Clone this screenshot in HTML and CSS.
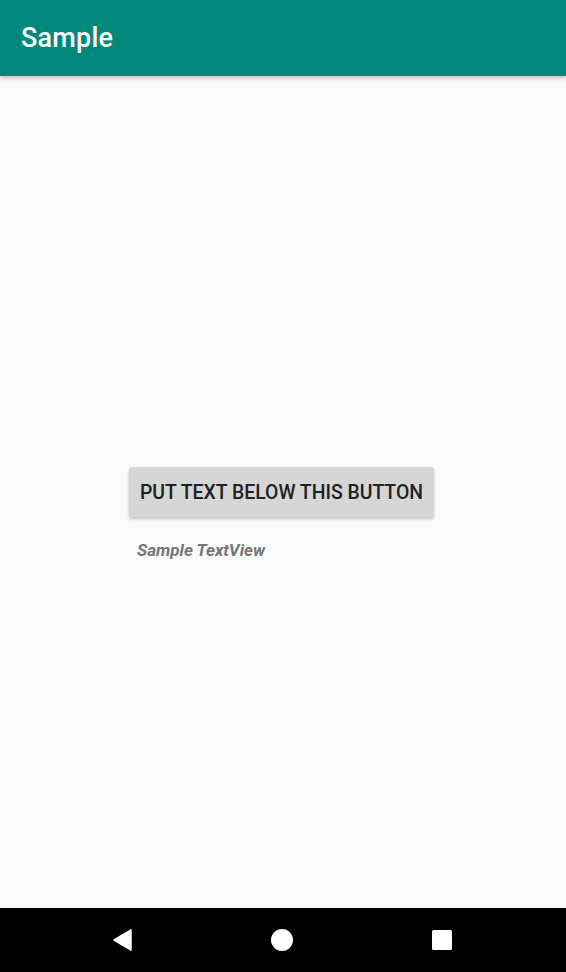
FILE: index.html
```html
<!DOCTYPE html>
<html>
<head>
<meta charset="utf-8">
<link rel="stylesheet" href="styles.css">
</head>
<body>
<div class="screen">
  <header class="toolbar"><span class="title">Sample</span></header>
  <main class="content">
    <button class="btn">PUT TEXT BELOW THIS BUTTON</button>
    <div class="textview">Sample TextView</div>
  </main>
  <nav class="navbar">
    <svg class="nav-icon" width="24" height="24" viewBox="0 0 24 24"><path d="M21 2 L21 22 L4 12 Z" fill="#fff" stroke="#fff" stroke-width="1.5" stroke-linejoin="round"/></svg>
    <svg class="nav-icon" width="24" height="24" viewBox="0 0 24 24"><circle cx="12" cy="12" r="11" fill="#fff"/></svg>
    <svg class="nav-icon" width="24" height="24" viewBox="0 0 24 24"><rect x="3" y="2" width="20" height="20" rx="1.5" fill="#fff"/></svg>
  </nav>
</div>
</body>
</html>
```
FILE: styles.css
```css
html, body {
  margin: 0;
  padding: 0;
  height: 100%;
}
body {
  font-family: Roboto, "Noto Sans", sans-serif;
  background: #fafafa;
}
.screen {
  height: 972px;
  display: flex;
  flex-direction: column;
}
.toolbar {
  height: 76px;
  flex: 0 0 76px;
  background: #00897b;
  display: flex;
  align-items: center;
  padding-left: 21px;
  box-shadow: 0 2px 4px rgba(0,0,0,0.25);
  position: relative;
  z-index: 1;
}
.title {
  color: #fff;
  font-size: 27px;
  font-weight: 500;
  letter-spacing: 0.2px;
}
.content {
  flex: 1;
  display: grid;
  grid-template-rows: 1fr auto 1fr;
  grid-template-columns: 1fr auto 1fr;
  padding-right: 3px;
  background: #fafafa;
}
.btn {
  grid-row: 2;
  grid-column: 2;
  height: 50px;
  width: 305px;
  border: none;
  border-radius: 3px;
  background: #d6d6d6;
  color: #212121;
  font-family: Roboto, sans-serif;
  font-weight: 500;
  font-size: 19.4px;
  padding: 0;
  box-shadow: 0 2px 3px rgba(0,0,0,0.22);
}
.textview {
  grid-row: 3;
  grid-column: 2;
  justify-self: start;
  align-self: start;
  margin-left: 8px;
  margin-top: 23px;
  font-size: 17px;
  font-style: italic;
  font-weight: 700;
  color: #757575;
}
.navbar {
  flex: 0 0 64px;
  height: 64px;
  background: #000;
  display: flex;
  align-items: center;
  justify-content: space-between;
  padding: 0 113px 0 110px;
}
.nav-icon {
  display: block;
}
```
